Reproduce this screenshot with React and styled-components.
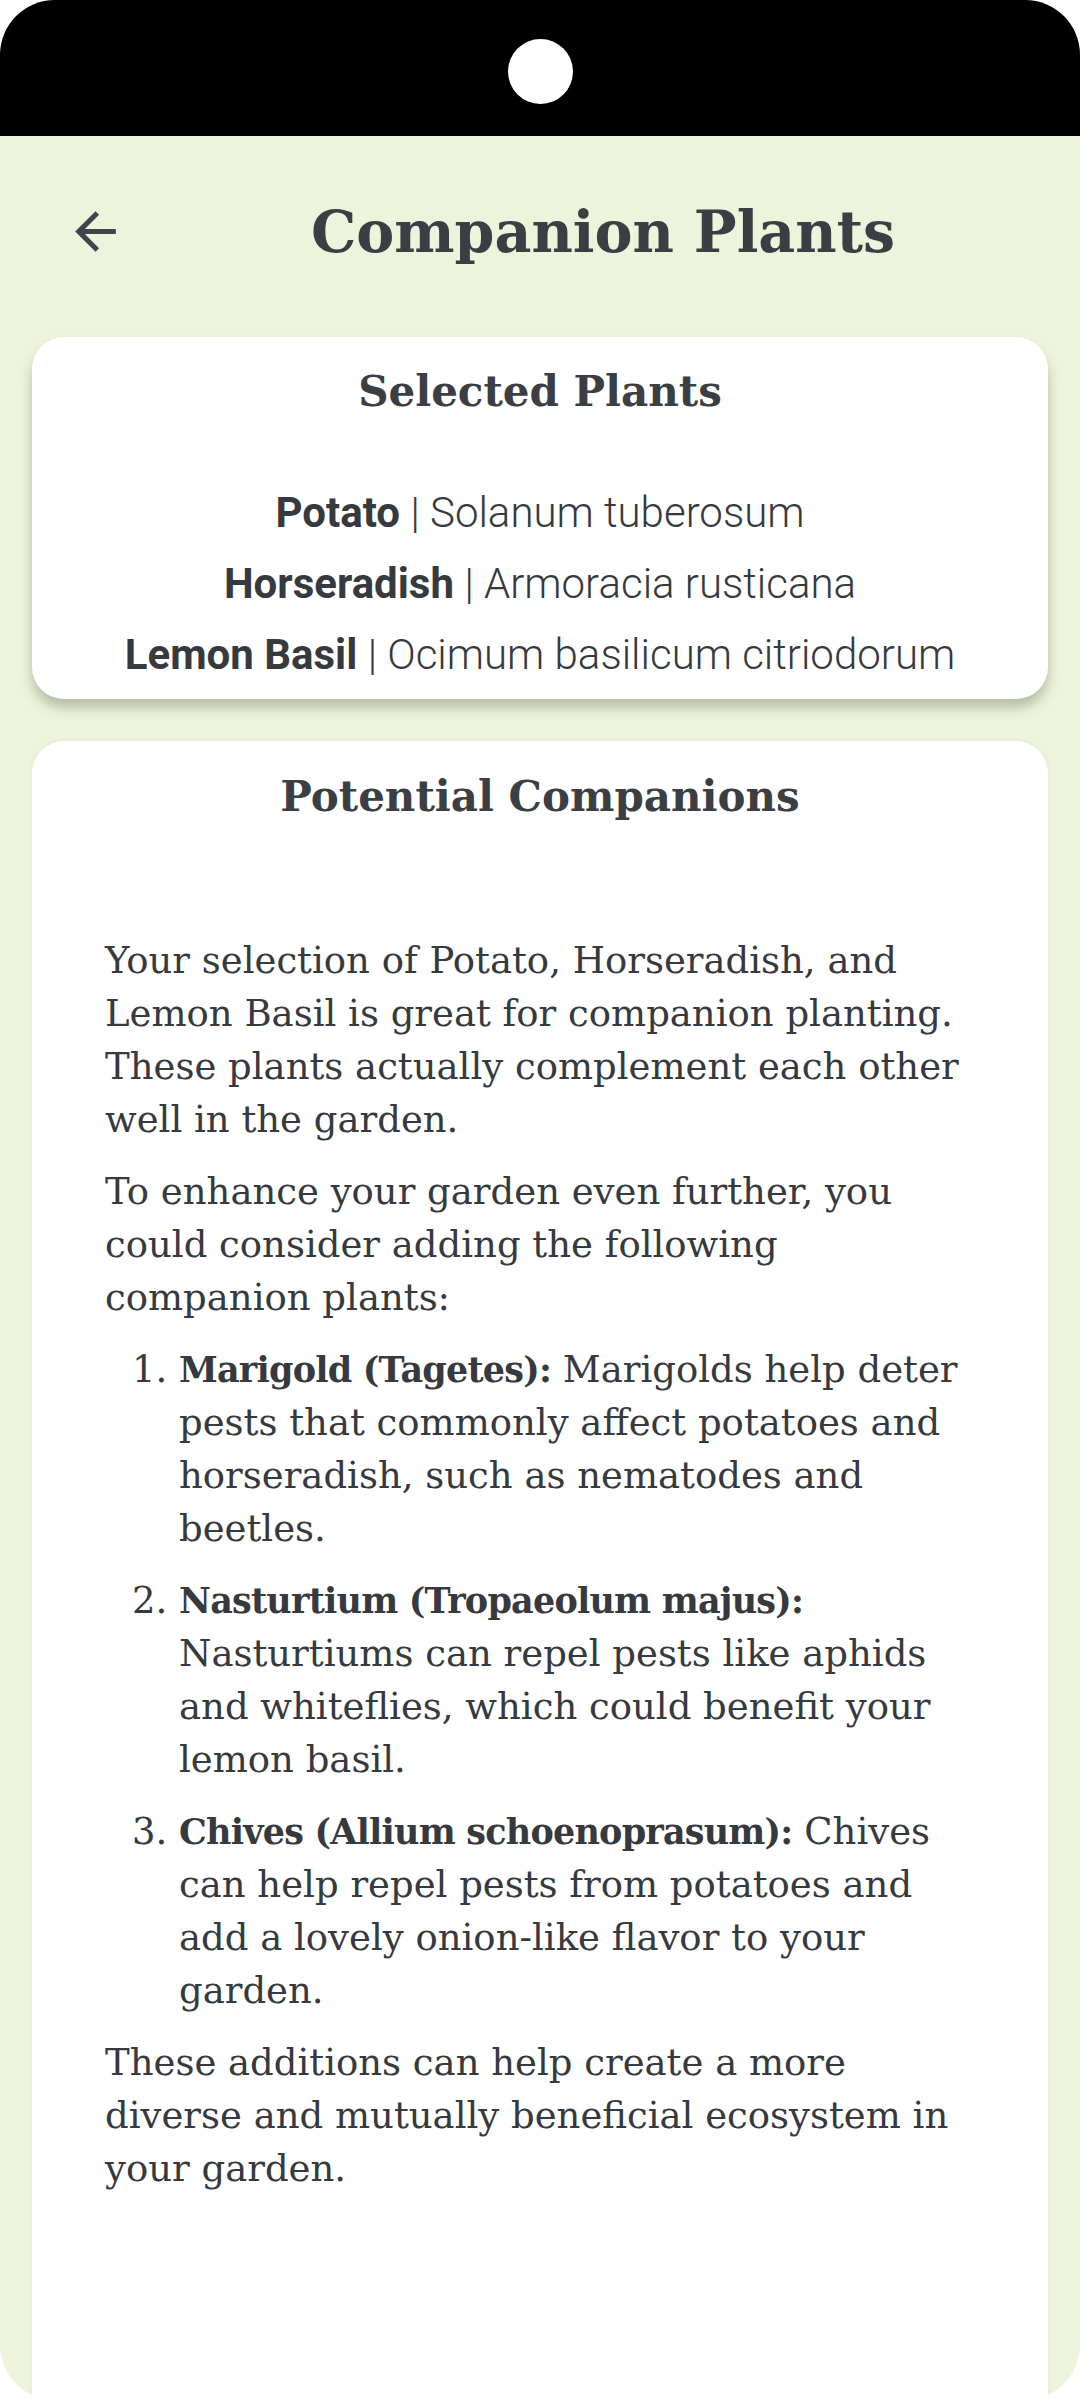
import styled, { createGlobalStyle } from "styled-components";

const GlobalStyle = createGlobalStyle`
  * {
    box-sizing: border-box;
  }
  body {
    margin: 0;
    background: #ffffff;
  }
`;

const Phone = styled.div`
  width: 1080px;
  height: 2400px;
  background: #eef4db;
  border-radius: 55px;
  overflow: hidden;
  display: flex;
  flex-direction: column;
`;

const StatusBar = styled.div`
  height: 136px;
  flex-shrink: 0;
  background: #000;
  display: flex;
  justify-content: center;
  padding-top: 39px;
`;

const Camera = styled.div`
  width: 65px;
  height: 65px;
  border-radius: 50%;
  background: #fff;
`;

const Header = styled.header`
  height: 190px;
  flex-shrink: 0;
  display: flex;
  align-items: center;
  padding: 0 24px 0 40px;
`;

const BackButton = styled.button`
  width: 110px;
  height: 110px;
  display: flex;
  align-items: center;
  justify-content: center;
  border: none;
  background: none;
  padding: 0;
  color: #41454b;
  cursor: pointer;
`;

const Title = styled.h1`
  flex: 1;
  margin: 0;
  text-align: center;
  font-family: "DejaVu Serif", "Liberation Serif", serif;
  font-weight: 700;
  font-size: 57px;
  color: #3b3e42;
`;

const Card = styled.section`
  margin: ${({ $top }) => $top}px 32px 0;
  background: #fff;
  border-radius: ${({ $open }) => ($open ? "32px 32px 0 0" : "32px")};
  box-shadow: ${({ $raised }) =>
    $raised ? "0 9px 12px rgba(60, 70, 40, 0.3)" : "0 0 4px rgba(60, 70, 40, 0.08)"};
  padding: ${({ $pad }) => $pad};
  flex: ${({ $open }) => ($open ? 1 : "none")};
`;

const CardTitle = styled.h2`
  margin: 0 0 ${({ $gap }) => $gap}px;
  text-align: center;
  font-family: "DejaVu Serif", "Liberation Serif", serif;
  font-weight: 700;
  font-size: 42px;
  line-height: 60px;
  color: #3b3e42;
`;

const PlantList = styled.ul`
  list-style: none;
  margin: 0;
  padding: 0;
  text-align: center;
  font-family: Roboto, "Liberation Sans", sans-serif;
  font-size: 42px;
  line-height: 71px;
  color: #36393d;
`;

const PlantName = styled.b`
  font-weight: 700;
`;

const Latin = styled.span`
  font-weight: 300;
`;

const Body = styled.div`
  font-family: "DejaVu Serif", "Liberation Serif", serif;
  font-size: 37px;
  line-height: 53px;
  color: #36393d;

  p {
    margin: 0 0 19px;
  }

  strong {
    font-weight: 700;
    font-size: 35px;
    letter-spacing: -0.8px;
  }
`;

const Steps = styled.ol`
  margin: 0 0 19px;
  padding-left: 74px;

  li {
    margin-bottom: 19px;
  }
`;

const plants = [
  { name: "Potato", latin: "Solanum tuberosum" },
  { name: "Horseradish", latin: "Armoracia rusticana" },
  { name: "Lemon Basil", latin: "Ocimum basilicum citriodorum" },
];

const companions = [
  {
    name: "Marigold (Tagetes):",
    text: "Marigolds help deter pests that commonly affect potatoes and horseradish, such as nematodes and beetles.",
  },
  {
    name: "Nasturtium (Tropaeolum majus):",
    text: "Nasturtiums can repel pests like aphids and whiteflies, which could benefit your lemon basil.",
  },
  {
    name: "Chives (Allium schoenoprasum):",
    text: "Chives can help repel pests from potatoes and add a lovely onion-like flavor to your garden.",
  },
];

const ArrowBack = () => (
  <svg width="61" height="61" viewBox="0 0 24 24" fill="currentColor">
    <path d="M20 11H7.83l5.59-5.59L12 4l-8 8 8 8 1.41-1.41L7.83 13H20v-2z" />
  </svg>
);

export default function App() {
  return (
    <>
      <GlobalStyle />
      <Phone>
        <StatusBar>
          <Camera />
        </StatusBar>
        <Header>
          <BackButton aria-label="Back">
            <ArrowBack />
          </BackButton>
          <Title>Companion Plants</Title>
        </Header>

        <Card $top={11} $raised $pad="25px 20px 9px">
          <CardTitle $gap={55}>Selected Plants</CardTitle>
          <PlantList>
            {plants.map((p) => (
              <li key={p.name}>
                <PlantName>{p.name}</PlantName> <Latin>| {p.latin}</Latin>
              </li>
            ))}
          </PlantList>
        </Card>

        <Card $top={42} $open $pad="26px 73px">
          <CardTitle $gap={107}>Potential Companions</CardTitle>
          <Body>
            <p>
              Your selection of Potato, Horseradish, and Lemon Basil is great for
              companion planting. These plants actually complement each other well
              in the garden.
            </p>
            <p>
              To enhance your garden even further, you could consider adding the
              following companion plants:
            </p>
            <Steps>
              {companions.map((c) => (
                <li key={c.name}>
                  <strong>{c.name}</strong> {c.text}
                </li>
              ))}
            </Steps>
            <p>
              These additions can help create a more diverse and mutually beneficial
              ecosystem in your garden.
            </p>
          </Body>
        </Card>
      </Phone>
    </>
  );
}
